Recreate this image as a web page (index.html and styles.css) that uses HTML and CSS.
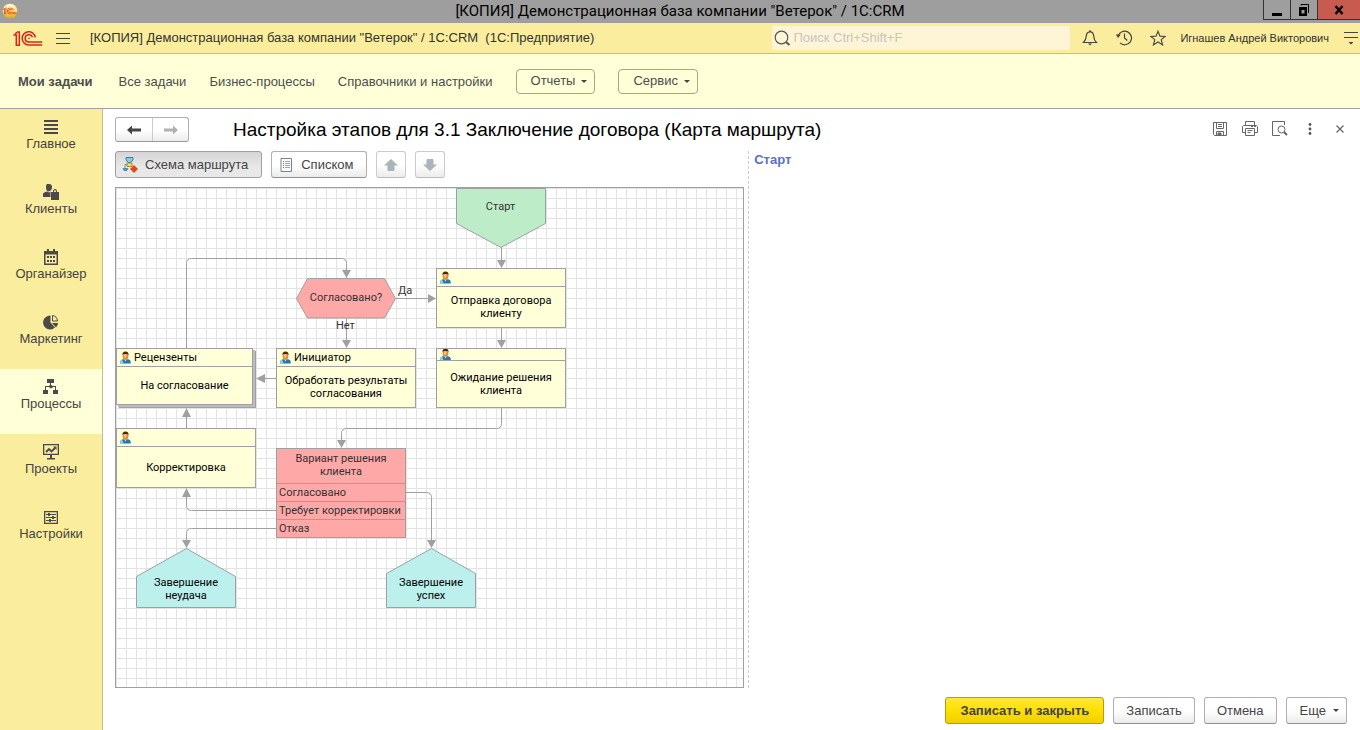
FILE: index.html
```html
<!DOCTYPE html>
<html lang="ru">
<head>
<meta charset="utf-8">
<title>[КОПИЯ] Демонстрационная база компании "Ветерок" / 1С:CRM</title>
<link rel="stylesheet" href="styles.css">
</head>
<body>
<svg class="defs" aria-hidden="true">
  <defs>
    <linearGradient id="gold" x1="0" y1="0" x2="0" y2="1"><stop offset="0" stop-color="#fffbe0"/><stop offset=".5" stop-color="#fbe26a"/><stop offset="1" stop-color="#dfa818"/></linearGradient>
    <symbol id="person" viewBox="0 0 11 13">
      <path d="M.3 12.500v-1.700Q.3 8.500 3 8.200h5q2.700.3 2.700 2.600v1.700z" fill="#2478b0"/>
      <path d="M.3 12.500v-1.700Q.3 9 2 8.500l1.700 4z" fill="#8fd0ee"/>
      <path d="M4.300 8.200h2.400l-1.200 2.300z" fill="#d8ecf5"/>
      <ellipse cx="5.500" cy="4.900" rx="2.900" ry="3.700" fill="#d98a35"/>
      <path d="M2.400 4.200Q2.300.6 5.500.6t3.100 3.600L7.700 2.900H3.300z" fill="#3b2b1e"/>
      <ellipse cx="5.200" cy="5" rx="1.500" ry="1.900" fill="#f8c070"/>
    </symbol>
    <symbol id="logo" viewBox="0 0 30 15">
      <g fill="none" stroke="#da251c" stroke-width="1.500">
        <path d="M.3 3.900h3v10.300h3V.9H4.600L2 2.800"/>
        <path d="M22.300 6.300a6.600 6.600 0 1 0-6.600 7.700h13.500"/>
        <path d="M19.400 6.300a3.700 3.700 0 1 0-3.700 4.800h13.500"/>
        <path d="M16.800 7.300h-1.600" stroke-width="1.200"/>
      </g>
    </symbol>
  </defs>
</svg>

<header class="titlebar">
  <svg class="titlebar__logo" viewBox="0 0 16 16"><circle cx="8" cy="8" r="7.300" fill="url(#gold)"/><use href="#logo" x="1" y="4.500" width="14" height="7"/></svg>
  <div class="titlebar__text">[КОПИЯ] Демонстрационная база компании "Ветерок" / 1С:CRM</div>
  <div class="winbtns">
    <button class="winbtn" aria-label="Свернуть"><svg width="12" height="14"><path d="M1 10h10v3H1z"/></svg></button>
    <button class="winbtn" aria-label="Развернуть"><svg width="12" height="12"><path d="M1 3h8v9H1zm2.500 3v3.500h3V6z" fill-rule="evenodd"/><path d="M3 1.500V.5h7.500V9" fill="none" stroke="#000"/></svg></button>
    <button class="winbtn winbtn--close" aria-label="Закрыть"><svg width="10" height="10"><path d="M1.500 1l7 8M8.500 1l-7 8" stroke="#000" stroke-width="2.500"/></svg></button>
  </div>
</header>

<div class="appbar">
  <svg class="appbar__logo" width="30" height="15"><use href="#logo" width="30" height="15"/></svg>
  <button class="iconbtn" aria-label="Меню"><svg width="14" height="12"><path d="M0 1.500h14M0 6.500h14M0 11.500h14" stroke="#444"/></svg></button>
  <div class="appbar__title">[КОПИЯ] Демонстрационная база компании "Ветерок" / 1С:CRM&nbsp; (1С:Предприятие)</div>
  <label class="search">
    <svg width="17" height="17" viewBox="0 0 17 17"><circle cx="7.500" cy="7.500" r="6.300" fill="none" stroke="#555" stroke-width="1.200"/><path d="M12 12l3.500 3" stroke="#555" stroke-width="2"/></svg>
    <input class="search__input" type="text" placeholder="Поиск Ctrl+Shift+F" aria-label="Поиск">
  </label>
  <div class="appbar__tools">
    <button class="iconbtn" aria-label="Уведомления"><svg width="16" height="16" viewBox="0 0 16 16"><path d="M1.500 12.500Q4 10 4.300 6T8 1.800 11.700 6t2.800 6.500z" fill="none" stroke="#444" stroke-width="1.200"/><path d="M6 13.500h4l-2 2zM7 .5h2v1.500H7z" fill="#444"/></svg></button>
    <button class="iconbtn" aria-label="История"><svg width="18" height="16" viewBox="0 0 18 16"><path d="M3.200 6A6.800 6.800 0 1 1 5 12.900M9.500 3.500V8l2.800 2.500" fill="none" stroke="#444" stroke-width="1.200"/><path d="M.8 4.500h5L3 8z" fill="#444"/></svg></button>
    <button class="iconbtn" aria-label="Избранное"><svg width="16" height="16" viewBox="0 0 16 16"><path d="M8 1.200l2 4.900 5.200.3-4 3.300 1.400 5.200L8 12l-4.600 2.900 1.400-5.200-4-3.300L6 6.100z" fill="none" stroke="#444" stroke-width="1.100"/></svg></button>
  </div>
  <a class="appbar__user" href="#">Игнашев Андрей Викторович</a>
  <button class="iconbtn" aria-label="Настройки окна"><svg width="14" height="13"><path d="M0 .5h14M0 5.500h14" stroke="#444"/><path d="M4.500 10h5L7 12.500z" fill="#444"/></svg></button>
</div>

<nav class="sections">
  <a class="sections__link sections__link--bold" href="#">Мои задачи</a>
  <a class="sections__link" href="#">Все задачи</a>
  <a class="sections__link" href="#">Бизнес-процессы</a>
  <a class="sections__link" href="#">Справочники и настройки</a>
  <button class="sections__btn">Отчеты<i class="caret"></i></button>
  <button class="sections__btn">Сервис<i class="caret"></i></button>
</nav>

<div class="workspace">
  <nav class="sidebar">
    <a class="side" href="#"><svg width="16" height="16" fill="#4a4a4a"><path d="M1 1h14v2H1zM1 5h14v2H1zM1 9h14v2H1zM1 13h14v2H1z"/></svg>Главное</a>
    <a class="side" href="#"><svg width="16" height="16" fill="#4a4a4a"><path d="M6 0q3 0 3 3.300T6 7.300 3 3.300 6 0zM0 13V10q0-1.500 4-2.500l2 1 1.500-1V13zM8 8h2q0-3 2-3t2 3h2v8H8zm3 0h2q0-2-1-2t-1 2z"/></svg>Клиенты</a>
    <a class="side" href="#"><svg width="16" height="16" fill="#4a4a4a"><path d="M1 2h3V0h2v2h4V0h2v2h3v14H1zm1.500 3.500v9h11v-9zM4 7h2v2H4zm3 0h2v2H7zm3 0h2v2h-2zM4 11h2v2H4zm3 0h2v2H7zm3 0h2v2h-2z" fill-rule="evenodd"/></svg>Органайзер</a>
    <a class="side" href="#"><svg width="16" height="16" fill="#4a4a4a"><path d="M7.500 1.500v7l4.500 5a7 7 0 1 1-4.500-12z"/><path d="M9.500 1.500q4.500.5 5 5.500h-5z" fill="none" stroke="#4a4a4a"/><path d="M9 9h6q0 2.500-2 4.500z"/></svg>Маркетинг</a>
    <a class="side side--active" href="#"><svg width="16" height="16" fill="#4a4a4a"><path d="M4 0h7v4H4zM0 11h5v4H0zM10 11h5v4h-5zM7 4h1v2l3 1.500-3 2-3-2L7 6zM2 7h4v1H3v3H2zM9 7h4v4h-1V8H9z"/></svg>Процессы</a>
    <a class="side" href="#"><svg width="16" height="16" fill="#4a4a4a"><path d="M0 0h16v11H0zm1.300 1.300v8.400h13.400V1.300zM7 11h2v3h3v1.500H4V14h3z" fill-rule="evenodd"/><path d="M3 8l3-3 2.500 2.500L12 4" fill="none" stroke="#4a4a4a" stroke-width="1.800"/><path d="M10 2.500h3.500V6z"/></svg>Проекты</a>
    <a class="side" href="#"><svg width="16" height="16" fill="#4a4a4a"><path d="M1 2h14v13H1zm1.300 1.300v10.400h11.400V3.300z" fill-rule="evenodd"/><path d="M3 5h10v1H3zM3 8h10v1H3zM3 11h10v1H3zM5 4h2v3H5zM9 7h2v3H9zM6 10h2v3H6z"/></svg>Настройки</a>
  </nav>

  <main class="page">
    <div class="page__head">
      <div class="history">
        <button class="history__btn" aria-label="Назад"><svg width="14" height="10"><path d="M0 5l5-4.500v3h9v3H5v3z" fill="#444"/></svg></button>
        <button class="history__btn" aria-label="Вперед"><svg width="14" height="10"><path d="M14 5L9 .5v3H0v3h9v3z" fill="#b0b0b0"/></svg></button>
      </div>
      <h1 class="page__title">Настройка этапов для 3.1 Заключение договора (Карта маршрута)</h1>
      <div class="page__tools">
        <button class="iconbtn" aria-label="Сохранить"><svg width="16" height="16" fill="none" stroke="#666"><path d="M1.500 1.500h13v13h-12l-1-1zM4.500 1.500v6h7v-6M6 3.500h4M6 5.500h4M4.500 14.500v-4h7v4"/><path d="M6 12h3v2H6z" fill="#666"/></svg></button>
        <button class="iconbtn" aria-label="Печать"><svg width="16" height="16" fill="none" stroke="#666"><path d="M3.500 4.500v-4h9v4M3.500 11.500h-3v-6l1-1h13l1 1v6h-3M3.500 7.500h9v7h-9zM5.500 9.500h5M5.500 11.500h3"/><path d="M9 5.500h2M12 5.500h2"/></svg></button>
        <button class="iconbtn" aria-label="Предпросмотр"><svg width="16" height="16" fill="none" stroke="#666"><path d="M12.500 4V.5H.5v14H8"/><circle cx="9.500" cy="8.500" r="3.500"/><path d="M12 11l3 3" stroke-width="2"/></svg></button>
        <button class="iconbtn" aria-label="Ещё"><svg width="16" height="16" fill="#555"><circle cx="8" cy="3.500" r="1.400"/><circle cx="8" cy="8" r="1.400"/><circle cx="8" cy="12.500" r="1.400"/></svg></button>
        <button class="iconbtn" aria-label="Закрыть форму"><svg width="16" height="16"><path d="M4.500 4.500l7 7M11.500 4.500l-7 7" stroke="#666" stroke-width="1.200"/></svg></button>
      </div>
    </div>

    <div class="split">
      <section class="scheme">
        <div class="toolbar">
          <button class="btn btn--pressed"><svg width="16" height="16"><path d="M4 .5h7v2L9 5.500H6L4 2.500z" fill="#7fd0ee" stroke="#347fa8"/><path d="M5 6h5v3.500H5z" fill="#f7dc6a" stroke="#a98a25"/><path d="M5 7.500H3V11" fill="none" stroke="#888"/><path d="M.5 11h6L5 14H2z" fill="#4d90b4"/><path d="M12 8l4 4-4 4-4-4z" fill="#df4a22"/></svg>Схема маршрута</button>
          <button class="btn"><svg width="16" height="16"><path d="M3 1.500h10.500v13H3z" fill="#fff" stroke="#778294"/><path d="M7 4.500h5M7 6.500h5M7 8.500h5M7 10.500h5" stroke="#888" stroke-width=".8"/><path d="M5 4.500h1M5 6.500h1M5 8.500h1M5 10.500h1" stroke="#d0572b"/></svg>Списком</button>
          <button class="btn btn--icon" disabled aria-label="Вверх"><svg width="14" height="12"><path d="M7 0l7 6.500h-3.500V11q0 1-1 1h-5q-1 0-1-1V6.500H0z" fill="#a9b5ba"/></svg></button>
          <button class="btn btn--icon" disabled aria-label="Вниз"><svg width="14" height="12"><path d="M7 12L0 5.500h3.500V1q0-1 1-1h5q1 0 1 1v4.500H14z" fill="#a9b5ba"/></svg></button>
        </div>

        <div class="canvas">
          <svg class="canvas__shapes" width="520" height="430" aria-hidden="true">
            <g fill="none" stroke="#a0a0a0">
              <path d="M385.500 59v14M385.500 140v14M385.500 220v15.500q0 5-5 5h-150q-5 0-5 5V254"/>
              <path d="M280 110.500h33M230.500 130v24M160 190.500h-13M70.500 160V75.500q0-5 5-5h150q5 0 5 5V84"/>
              <path d="M70.500 240v-14M160 322.500H75.500q-5 0-5-5V306M160 340.500H75.500q-5 0-5 5V354M290 304.500h20.500q5 0 5 5V354"/>
            </g>
            <g fill="#a0a0a0">
              <path d="M381 72h9l-4.500 8zM381 152h9l-4.500 8zM221 252h9l-4.500 8zM226 152h9l-4.500 8zM226 82h9l-4.500 8zM66 352h9l-4.500 8zM311 352h9l-4.500 8z"/>
              <path d="M312 106v9l8-4.500zM149 186v9l-9-4.500zM66 229h9l-4.500-9zM66 309h9l-4.500-9z"/>
            </g>
            <g stroke="#a0a0a0">
              <path d="M340.500 .5h89v35l-44.500 24-44.500-24z" fill="#bcedc8"/>
              <path d="M180.500 110.500l11-20h77l11 20-11 19.500h-77z" fill="#ffa8a8"/>
              <path d="M20.500 419.500v-31l50-28 49 28v31z" fill="#bbf0ec"/>
              <path d="M270.500 419.500v-34l45-25 44 25v34z" fill="#bbf0ec"/>
            </g>
          </svg>

          <div class="label label--start">Старт</div>
          <div class="label label--decision">Согласовано?</div>
          <div class="label label--yes">Да</div>
          <div class="label label--no">Нет</div>
          <div class="label label--fail">Завершение<br>неудача</div>
          <div class="label label--success">Завершение<br>успех</div>

          <div class="node node--send"><div class="node__head"><svg class="person"><use href="#person"/></svg></div><div class="node__body">Отправка договора<br>клиенту</div></div>
          <div class="node node--wait"><div class="node__head"><svg class="person"><use href="#person"/></svg></div><div class="node__body">Ожидание решения<br>клиента</div></div>
          <div class="node node--review"><div class="node__head"><svg class="person"><use href="#person"/></svg>Рецензенты</div><div class="node__body">На согласование</div></div>
          <div class="node node--init"><div class="node__head"><svg class="person"><use href="#person"/></svg>Инициатор</div><div class="node__body">Обработать результаты<br>согласования</div></div>
          <div class="node node--fix"><div class="node__head"><svg class="person"><use href="#person"/></svg></div><div class="node__body">Корректировка</div></div>
          <div class="node node--choice">
            <div class="node__body">Вариант решения<br>клиента</div>
            <div class="node__case">Согласовано</div>
            <div class="node__case">Требует корректировки</div>
            <div class="node__case">Отказ</div>
          </div>
        </div>
      </section>
      <section class="details"><h2 class="details__title">Старт</h2></section>
    </div>

    <footer class="actions">
      <button class="btn btn--primary">Записать и закрыть</button>
      <button class="btn">Записать</button>
      <button class="btn">Отмена</button>
      <button class="btn btn--more">Еще<i class="caret"></i></button>
    </footer>
  </main>
</div>
</body>
</html>
```
FILE: styles.css
```css
* { box-sizing: border-box; }
body {
  margin: 0;
  min-height: 100vh;
  display: flex;
  flex-direction: column;
  background: #fff;
  color: #444;
  font: 13px/16px "Liberation Sans", Arial, sans-serif;
}
a { color: inherit; text-decoration: none; }
button { font: inherit; color: inherit; cursor: pointer; }
svg { display: block; flex: none; }
.defs { position: absolute; width: 0; height: 0; }
.iconbtn { display: flex; padding: 0; border: 0; background: none; }
.caret {
  border: 3px solid transparent;
  border-top-color: #444;
  border-bottom: 0;
}

/* Window title */
.titlebar {
  display: grid;
  grid-template-columns: 100px 1fr 100px;
  height: 23px;
  background: #9e9e9e;
  color: #000;
}
.titlebar__logo { width: 16px; height: 16px; margin: 3px 2px; }
.titlebar__text { text-align: center; font: 15px/23px Roboto, "Noto Sans", sans-serif; white-space: nowrap; }
.winbtns { display: flex; justify-content: flex-end; }
.winbtn {
  display: grid;
  place-items: center;
  width: 27px;
  height: 20px;
  padding: 0;
  border: 1px solid #333;
  border-width: 0 0 1px 1px;
  background: none;
}
.winbtn--close { width: 43px; background: #c75b50; }

/* Application bar */
.appbar {
  display: flex;
  align-items: center;
  height: 31px;
  padding: 0 2px 0 13px;
  background: #fbed9e;
  border-bottom: 1px solid #c8bd7e;
}
.appbar__logo { margin-right: 13px; }
.appbar__title { margin: 0 auto 0 20px; color: #333; white-space: nowrap; }
.search {
  display: flex;
  align-items: center;
  gap: 2px;
  flex: 0 1 298px;
  height: 24px;
  padding-left: 2px;
  background: #fdf5d5;
  border-radius: 2px;
}
.search__input { flex: 1; min-width: 0; padding: 0; border: 0; background: none; font: inherit; outline: 0; }
.search__input::placeholder { color: #c8c4c8; }
.appbar__tools { display: flex; align-items: center; gap: 17px; margin: 0 14px 0 12px; }
.appbar__user { margin-right: 15px; font-size: 11px; color: #333; white-space: nowrap; }

/* Section commands */
.sections {
  display: flex;
  align-items: center;
  gap: 23px;
  height: 55px;
  padding: 0 18px;
  background: #ffffd8;
  border-bottom: 1px solid #a0a0a0;
  color: #4d4d4d;
  white-space: nowrap;
}
.sections__link { padding-top: 2px; }
.sections__link--bold { margin-right: 3px; font-weight: bold; }
.sections__btn {
  display: flex;
  align-items: center;
  gap: 6px;
  height: 25px;
  padding: 0 7px 0 14px;
  border: 1px solid #a6a68c;
  border-radius: 4px;
  background: none;
}

.workspace { flex: 1; display: flex; }
.sidebar { flex: 0 0 103px; background: #fbed9e; border-right: 1px solid #c8bd7e; }
.side {
  display: flex;
  flex-direction: column;
  align-items: center;
  gap: 1px;
  height: 65px;
  padding-top: 10px;
}
.side--active { background: #ffffd8; }

/* Form */
.page { flex: 1; min-width: 0; display: flex; flex-direction: column; padding: 8px 12px 6px; }
.page__head { display: flex; align-items: center; height: 25px; }
.history {
  display: flex;
  height: 25px;
  border: 1px solid #b0b0b0;
  border-bottom-color: #999;
  border-radius: 3px;
  background: linear-gradient(#fff 50%, #ececec);
}
.history__btn { display: grid; place-items: center; width: 36px; padding: 0; border: 0; background: none; }
.history__btn + .history__btn { border-left: 1px solid #ccc; }
.page__title { margin: 0 auto 0 44px; font-size: 19px; line-height: 24px; font-weight: normal; color: #000; white-space: nowrap; }
.page__tools { display: flex; gap: 14px; padding-bottom: 2px; }

.split { flex: 1; display: grid; grid-template-columns: 64fr 61fr; gap: 4px; padding-top: 9px; }
.scheme { display: flex; flex-direction: column; gap: 9px; min-width: 0; }
.toolbar { display: flex; gap: 9px; }
.btn {
  display: flex;
  align-items: center;
  justify-content: center;
  gap: 7px;
  height: 27px;
  padding: 0 12px;
  border: 1px solid #b0b0b0;
  border-bottom-color: #8f8f8f;
  border-radius: 3px;
  background: linear-gradient(#fff 50%, #ececec);
  white-space: nowrap;
}
.toolbar .btn { padding: 0 13px 0 6px; }
.btn--pressed { background: linear-gradient(#d5d5d5, #e8e8e8 60%); border-color: #a0a0a0; }
.toolbar .btn--icon { width: 30px; padding: 0; border-color: #ccc; border-bottom-color: #bbb; }
.btn--primary { padding: 0 14px; background: linear-gradient(#ffe939, #ffdf00 50%, #efd000); border-color: #b89d00; font-weight: bold; }
.btn--more { padding: 0 7px 0 13px; }
.actions { display: flex; justify-content: flex-end; gap: 9px; padding: 9px 1px 0 0; }

.details { padding: 0 5px; border-left: 1px dashed #ccc; }
.details__title { margin: 0; font: bold 13px/17px "Liberation Sans", Arial, sans-serif; color: #5a6fc8; }

/* Route map */
.canvas {
  flex: 1;
  min-height: 440px;
  position: relative;
  overflow: hidden;
  border: 1px solid #a0a0a0;
  background:
    linear-gradient(90deg, #e3e3e3 1px, transparent 1px) 0 0 / 10px 10px,
    linear-gradient(#e3e3e3 1px, transparent 1px) 0 0 / 10px 10px,
    #fff;
  color: #000;
  font: 11px/13px Roboto, "Noto Sans", sans-serif;
}
.canvas__shapes { position: absolute; left: 0; top: 0; }
.label { position: absolute; text-align: center; white-space: nowrap; }
.label--start { left: 340px; top: 12px; width: 89px; color: #333; }
.label--decision { left: 180px; top: 103px; width: 100px; color: #333; }
.label--yes { left: 282px; top: 96px; color: #333; }
.label--no { left: 220px; top: 131px; color: #333; }
.label--fail { left: 20px; top: 388px; width: 100px; }
.label--success { left: 270px; top: 388px; width: 90px; }
.node {
  position: absolute;
  display: flex;
  flex-direction: column;
  width: 140px;
  height: 60px;
  border: 1px solid #a0a0a0;
  background: #ffffd8;
  white-space: nowrap;
}
.node__head { display: flex; align-items: center; gap: 3px; height: 18px; padding-left: 3px; border-bottom: 1px solid #a0a0a0; }
.node__body { flex: 1; display: grid; place-content: center; text-align: center; }
.node__case { height: 18px; padding-left: 2px; border-top: 1px solid #a0a0a0; line-height: 17px; }
.person { width: 11px; height: 13px; }
.node--send { left: 320px; top: 80px; width: 130px; }
.node--wait { left: 320px; top: 160px; width: 130px; }
.node--wait .node__head { height: 12px; overflow: hidden; }
.node--review { left: 0; top: 160px; width: 137px; height: 57px; box-shadow: 2px 2px 0 #bcbcbc, 3px 3px 0 #a0a0a0; }
.node--init { left: 160px; top: 160px; }
.node--fix { left: 0; top: 240px; }
.node--choice { left: 160px; top: 260px; width: 130px; height: 90px; background: #ffa8a8; color: #333; }
.node--choice .node__body { padding-bottom: 2px; }
```
